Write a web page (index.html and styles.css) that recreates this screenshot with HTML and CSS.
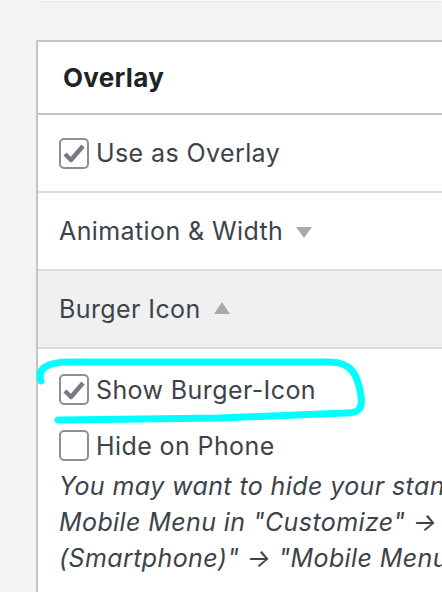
FILE: index.html
```html
<!DOCTYPE html>
<html lang="en">
<head>
    <meta charset="UTF-8">
    <meta name="viewport" content="width=device-width, initial-scale=1.0">
    <title>Overlay Settings</title>
    <link rel="stylesheet" href="styles.css">
</head>
<body>
    <div class="prev-panel"></div>

    <div class="panel">
        <div class="panel-head">Overlay</div>

        <div class="row">
            <label class="check">
                <span class="box checked">
                    <svg width="22" height="20" viewBox="0 0 22 20"><path d="M2 11 L8 17 L20 3" fill="none" stroke="#787c82" stroke-width="4.5" stroke-linejoin="round"/></svg>
                </span>
                Use as Overlay
            </label>
        </div>

        <div class="row">
            <span class="toggle">Animation &amp; Width <span class="arrow down"></span></span>
        </div>

        <div class="row open">
            <span class="toggle">Burger Icon <span class="arrow up"></span></span>
        </div>

        <div class="section">
            <label class="check">
                <span class="box checked">
                    <svg width="22" height="20" viewBox="0 0 22 20"><path d="M2 11 L8 17 L20 3" fill="none" stroke="#787c82" stroke-width="4.5" stroke-linejoin="round"/></svg>
                </span>
                Show Burger-Icon
            </label>
            <label class="check">
                <span class="box"></span>
                Hide on Phone
            </label>
            <p class="hint">You may want to hide your standard<br>Mobile Menu in "Customize" → "Header<br>(Smartphone)" → "Mobile Menu".</p>
        </div>
    </div>

    <!-- hand drawn highlight -->
    <svg class="marker" width="442" height="592" viewBox="0 0 442 592">
        <path d="M41 381 C37 369 46 362 70 362 L330 362 C352 362 358 376 361 396 C363 410 358 413 345 413 L220 418 L58 420" fill="none" stroke="#00ffff" stroke-width="7" stroke-linecap="round" stroke-linejoin="round"/>
    </svg>
</body>
</html>
```

FILE: styles.css
```css
body {
    margin: 0;
    height: 592px;
    overflow: hidden;
    background-color: #f3f3f3;
    font-family: Inter, "Noto Sans", sans-serif;
    color: #3c434a;
}
.prev-panel {
    margin-left: 36px;
    height: 1px;
    background-color: #f8f8f8;
    box-shadow: 0 1px 2px rgba(0, 0, 0, 0.06);
}
.panel {
    margin: 39px 0 0 36px;
    width: 560px;
    background-color: #fff;
    border: 2px solid #c3c4c7;
    border-right: none;
}
.panel-head {
    height: 71px;
    display: flex;
    align-items: center;
    padding-left: 25px;
    font-size: 26px;
    font-weight: 700;
    letter-spacing: 0.3px;
    color: #1d2327;
    border-bottom: 2px solid #c3c4c7;
}
.row {
    height: 76px;
    display: flex;
    align-items: center;
    padding-left: 21px;
    font-size: 25px;
    letter-spacing: 0.4px;
    border-bottom: 2px solid #dcdcde;
}
.row.open {
    background-color: #f0f0f1;
}
.check {
    display: flex;
    align-items: center;
    gap: 7px;
    font-size: 25px;
    letter-spacing: 0.4px;
}
.box {
    width: 26px;
    height: 27px;
    border: 2px solid #8c8f94;
    border-radius: 5px;
    display: flex;
    align-items: center;
    justify-content: center;
    background-color: #fff;
}
.toggle {
    display: flex;
    align-items: center;
    gap: 13px;
}
.arrow {
    width: 0;
    height: 0;
    border-left: 8px solid transparent;
    border-right: 8px solid transparent;
}
.arrow.down {
    margin-top: 2px;
    border-top: 11px solid #a7aaad;
}
.arrow.up {
    margin-top: -2px;
    border-bottom: 12px solid #a7aaad;
}
.section {
    padding: 25px 0 80px 21px;
    display: flex;
    flex-direction: column;
    gap: 25px;
}
.hint {
    margin: -18px 0 0;
    white-space: nowrap;
    font-size: 25px;
    font-style: italic;
    letter-spacing: 0.4px;
    line-height: 36px;
}
.marker {
    position: absolute;
    top: 0;
    left: 0;
}
```
